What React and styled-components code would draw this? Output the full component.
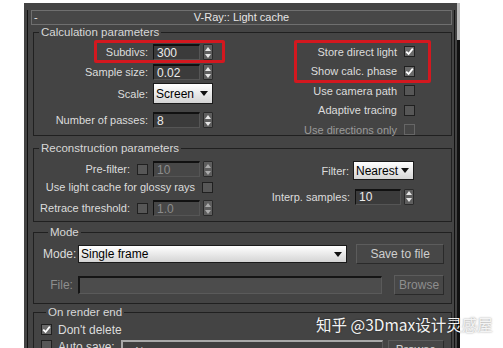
import React from "react";
import styled, { createGlobalStyle } from "styled-components";

const GlobalStyle = createGlobalStyle`
  html, body {
    margin: 0;
    padding: 0;
    background: #fff;
  }
  body {
    font-family: "Liberation Sans", Arial, sans-serif;
    font-size: 11px;
  }
`;

const Page = styled.div`
  position: relative;
  width: 503px;
  height: 348px;
  overflow: hidden;
  padding: 3px 0 0 24px;
  box-sizing: border-box;
`;

const Window = styled.div`
  width: 436px;
  height: 360px;
  background: #444;
  display: flex;
`;

const Content = styled.div`
  flex: 1;
  min-width: 0;
  padding: 7px 2px 0 3px;
`;

const Scrollbar = styled.div`
  width: 3px;
  background: #111;
`;

const Thumb = styled.div`
  height: 37px;
  background: #bcbcbc;
`;

const Rollout = styled.div`
  height: 100%;
  box-sizing: border-box;
  border-left: 1px solid #121212;
  border-right: 1px solid #121212;
`;

const TitleBar = styled.div`
  margin: 0 2px 0 3px;
  height: 15px;
  box-sizing: border-box;
  border: 1px solid #6f6f6f;
  background: #474747;
  color: #e6e6e6;
  display: grid;
  grid-template-columns: 1fr auto 1fr;
  align-items: center;
  line-height: 13px;
`;

const Minus = styled.span`
  padding-left: 2px;
`;

const Group = styled.fieldset`
  margin: ${(p) => p.$mt}px 2px 0 5px;
  padding: 0 ${(p) => p.$pr}px ${(p) => p.$pb}px ${(p) => p.$pl}px;
  border: 1px solid #202020;
  min-width: 0;
  color: #dcdcdc;
`;

const Legend = styled.legend`
  margin-left: 5px;
  padding: 0 2px;
  font-size: 11.5px;
  line-height: 12px;
  color: #d8d8d8;
`;

const Body = styled.div`
  display: flex;
  justify-content: space-between;
  align-items: flex-start;
  padding-top: ${(p) => p.$pt}px;
`;

const Column = styled.div`
  display: flex;
  flex-direction: column;
  width: ${(p) => (p.$w ? `${p.$w}px` : "auto")};
  margin-top: ${(p) => p.$mt || 0}px;
  margin-bottom: ${(p) => p.$mb || 0}px;
`;

const Field = styled.div`
  display: flex;
  justify-content: flex-end;
  align-items: center;
  gap: ${(p) => (p.$gap != null ? p.$gap : 5)}px;
  height: ${(p) => p.$h}px;
  margin-top: ${(p) => p.$mt || 0}px;
  color: ${(p) => (p.$dim ? "#9a9a9a" : "#dcdcdc")};
  white-space: nowrap;
`;

const Mark = styled.div`
  position: relative;
  display: flex;
  flex-direction: column;
  align-items: flex-end;

  &::after {
    content: "";
    position: absolute;
    inset: ${(p) => p.$inset};
    border: 3px solid #d3181f;
    border-radius: 2px;
    pointer-events: none;
  }
`;

const MarkRow = styled(Mark)`
  flex-direction: row;
  align-items: center;
  gap: 5px;
`;

const Input = styled.span`
  display: flex;
  align-items: center;
  box-sizing: border-box;
  width: ${(p) => p.$w}px;
  height: ${(p) => p.$h || 16}px;
  padding-left: 3px;
  background: ${(p) => (p.$dim ? "#474747" : "#3b3b3b")};
  border-top: 2px solid #111;
  border-left: 1px solid #111;
  border-right: 1px solid #555;
  border-bottom: 1px solid #555;
  color: ${(p) => (p.$dim ? "#8c8c8c" : "#ececec")};
  font-size: 12px;
`;

const Arrows = styled.span`
  display: flex;
  flex-direction: column;
  justify-content: space-around;
  align-items: center;
  box-sizing: border-box;
  width: 10px;
  height: 16px;
  background: #5e5e5e;
  border: 1px solid #2a2a2a;
  border-radius: 1px;
`;

const SpinnerBox = styled.span`
  display: flex;
  align-items: center;
  gap: 3px;
`;

const Spinner = ({ value, dim, w = 47 }) => (
  <SpinnerBox>
    <Input $w={w} $dim={dim}>
      {value}
    </Input>
    <Arrows>
      <svg width="6" height="4" viewBox="0 0 6 4">
        <path d="M0 4 L3 0 L6 4 Z" fill={dim ? "#aaa" : "#e6e6e6"} />
      </svg>
      <svg width="6" height="4" viewBox="0 0 6 4">
        <path d="M0 0 L3 4 L6 0 Z" fill={dim ? "#aaa" : "#e6e6e6"} />
      </svg>
    </Arrows>
  </SpinnerBox>
);

const Select = styled.span`
  display: flex;
  align-items: center;
  justify-content: space-between;
  box-sizing: border-box;
  width: ${(p) => p.$w}px;
  height: ${(p) => p.$h}px;
  padding: 0 4px 0 2px;
  background: linear-gradient(#ffffff, #d4d4d4);
  border: 1px solid #1a1a1a;
  color: #000;
  font-size: 12px;
`;

const Dropdown = ({ value, w, h }) => (
  <Select $w={w} $h={h}>
    {value}
    <svg width="8" height="5" viewBox="0 0 8 5">
      <path d="M0 0 L8 0 L4 5 Z" fill="#111" />
    </svg>
  </Select>
);

const Box = styled.span`
  display: inline-flex;
  align-items: center;
  justify-content: center;
  box-sizing: border-box;
  flex: none;
  width: 11px;
  height: 11px;
  margin-left: ${(p) => p.$ml || 0}px;
  background: ${(p) => (p.$dim ? "#464646" : p.$checked ? "#6a6a6a" : "#575757")};
  border: 1px solid ${(p) => (p.$dim ? "#666" : "#202020")};
`;

const Check = ({ checked, dim, ml }) => (
  <Box $checked={checked} $dim={dim} $ml={ml}>
    {checked && (
      <svg width="9" height="9" viewBox="0 0 9 9">
        <path
          d="M1.2 4.6 L3.6 7 L7.8 1.6"
          fill="none"
          stroke="#fff"
          strokeWidth="1.8"
        />
      </svg>
    )}
  </Box>
);

const Row = styled.div`
  display: flex;
  align-items: ${(p) => p.$align || "center"};
  height: ${(p) => p.$h}px;
  margin-top: ${(p) => p.$mt || 0}px;
  white-space: nowrap;
`;

const RowLabel = styled.span`
  width: 30px;
  margin-right: 5px;
  text-align: right;
  color: ${(p) => (p.$dim ? "#8e8e8e" : "#dcdcdc")};
  font-size: 12px;
`;

const Button = styled.span`
  display: flex;
  align-items: center;
  justify-content: center;
  box-sizing: border-box;
  width: ${(p) => p.$w}px;
  height: 20px;
  margin-left: ${(p) => p.$ml}px;
  background: #474747;
  border: 1px solid #2a2a2a;
  border-top-color: #5c5c5c;
  border-left-color: #5c5c5c;
  color: ${(p) => (p.$dim ? "#8e8e8e" : "#cfcfcf")};
  font-size: 12px;
`;

const Path = styled.span`
  display: flex;
  align-items: center;
  box-sizing: border-box;
  width: ${(p) => p.$w}px;
  height: ${(p) => p.$h}px;
  margin-left: ${(p) => p.$ml || 0}px;
  padding-left: 6px;
  background: ${(p) => p.$bg || "#4c4c4c"};
  border-top: 2px solid ${(p) => p.$edge || "#151515"};
  border-left: 2px solid ${(p) => p.$edge || "#151515"};
  border-right: 1px solid #5a5a5a;
  border-bottom: 1px solid #5a5a5a;
  color: #bbb;
`;

const CheckLabel = styled.span`
  margin-left: 6px;
  font-size: 12px;
  color: #dcdcdc;
`;

const Watermark = styled.div`
  position: absolute;
  left: 316px;
  top: 313px;
  font-family: "Noto Sans CJK SC", "Liberation Sans", sans-serif;
  font-size: 15.5px;
  color: #f4f4f4;
  text-shadow: 0 0 2px rgba(0, 0, 0, 0.45);
  white-space: nowrap;
`;

export default function App() {
  return (
    <>
      <GlobalStyle />
      <Page>
        <Window>
          <Content>
            <Rollout>
              <TitleBar>
                <Minus>-</Minus>
                <span>V-Ray:: Light cache</span>
                <span />
              </TitleBar>

              <Group $mt={1} $pr={36} $pb={7} $pl={0}>
                <Legend>Calculation parameters</Legend>
                <Body $pt={6}>
                  <Column $w={179}>
                    <Field $h={16}>
                      <MarkRow $inset="-4px -12px -3px -12px">
                        <span>Subdivs:</span>
                        <Spinner value="300" />
                      </MarkRow>
                    </Field>
                    <Field $h={16} $mt={4}>
                      Sample size:
                      <Spinner value="0.02" />
                    </Field>
                    <Field $h={21} $mt={3}>
                      Scale:
                      <Dropdown value="Screen" w={60} h={21} />
                    </Field>
                    <Field $h={16} $mt={8}>
                      Number of passes:
                      <Spinner value="8" />
                    </Field>
                  </Column>
                  <Column $mt={-2} $mb={-14}>
                    <Mark $inset="-2px -16px -2px -10px">
                      <Field $h={19.5} $gap={7}>
                        Store direct light
                        <Check checked />
                      </Field>
                      <Field $h={19.5} $gap={7}>
                        Show calc. phase
                        <Check checked />
                      </Field>
                    </Mark>
                    <Field $h={19.5} $gap={7}>
                      Use camera path
                      <Check />
                    </Field>
                    <Field $h={19.5} $gap={7}>
                      Adaptive tracing
                      <Check />
                    </Field>
                    <Field $h={19.5} $gap={7} $dim>
                      Use directions only
                      <Check dim />
                    </Field>
                  </Column>
                </Body>
              </Group>

              <Group $mt={6} $pr={37} $pb={5} $pl={0}>
                <Legend>Reconstruction parameters</Legend>
                <Body $pt={7}>
                  <Column $w={179}>
                    <Field $h={16}>
                      Pre-filter:
                      <Check ml={2} />
                      <Spinner value="10" dim />
                    </Field>
                    <Field $h={14} $mt={3} $gap={7}>
                      Use light cache for glossy rays
                      <Check />
                    </Field>
                    <Field $h={16} $mt={6}>
                      Retrace threshold:
                      <Check ml={2} />
                      <Spinner value="1.0" dim />
                    </Field>
                  </Column>
                  <Column>
                    <Field $h={19} $gap={4}>
                      Filter:
                      <Dropdown value="Nearest" w={61} h={19} />
                    </Field>
                    <Field $h={17} $mt={8}>
                      Interp. samples:
                      <Spinner value="10" w={46} />
                    </Field>
                  </Column>
                </Body>
              </Group>

              <Group $mt={4} $pr={7} $pb={8} $pl={9}>
                <Legend>Mode</Legend>
                <Row $h={20} $mt={6}>
                  <RowLabel>Mode:</RowLabel>
                  <Dropdown value="Single frame" w={270} h={18} />
                  <Button $w={88} $ml={9}>
                    Save to file
                  </Button>
                </Row>
                <Row $h={20} $mt={11}>
                  <RowLabel $dim>File:</RowLabel>
                  <Path $w={305} $h={18} />
                  <Button $w={50} $ml={12} $dim>
                    Browse
                  </Button>
                </Row>
              </Group>

              <Group $mt={2} $pr={7} $pb={8} $pl={7}>
                <Legend>On render end</Legend>
                <Row $h={13} $mt={5}>
                  <Check checked />
                  <CheckLabel>Don't delete</CheckLabel>
                </Row>
                <Row $h={20} $mt={4} $align="flex-start">
                  <Check />
                  <CheckLabel>Auto save:</CheckLabel>
                  <Path $w={270} $h={20} $ml={6} $bg="#3f3f3f" $edge="#a8a8a8">
                    &lt;None&gt;
                  </Path>
                  <Button $w={58} $ml={5}>
                    Browse
                  </Button>
                </Row>
              </Group>
            </Rollout>
          </Content>
          <Scrollbar>
            <Thumb />
          </Scrollbar>
        </Window>
        <Watermark>知乎 @3Dmax设计灵感屋</Watermark>
      </Page>
    </>
  );
}
